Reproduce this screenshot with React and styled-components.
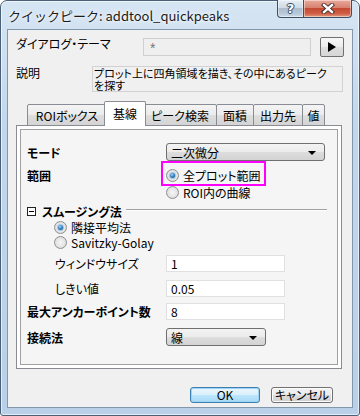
import React from 'react';
import styled, { createGlobalStyle } from 'styled-components';

const GlobalStyle = createGlobalStyle`
  html, body {
    margin: 0;
    padding: 0;
    background: #ffffff;
  }
  body {
    font-family: "Noto Sans CJK JP", "Noto Sans", sans-serif;
    font-size: 12px;
    color: #000;
    font-feature-settings: "palt" 1;
  }
  * {
    box-sizing: border-box;
  }
`;

const Window = styled.div`
  width: 360px;
  height: 416px;
  display: flex;
  flex-direction: column;
  padding: 0 6px 7px;
  border: 1px solid #4a5f78;
  border-radius: 7px 7px 3px 3px;
  background: linear-gradient(180deg, #d6e5f3 0%, #c2d7ec 30%, #b9d0e8 100%);
  box-shadow: inset 0 0 0 1px rgba(255, 255, 255, 0.6);
`;

const TitleBar = styled.div`
  height: 28px;
  display: flex;
  align-items: center;
  justify-content: space-between;
  padding-left: 1px;
`;

const Title = styled.div`
  font-size: 13px;
  color: #1b1b1b;
  font-feature-settings: normal;
  text-shadow: 0 0 6px rgba(255, 255, 255, 0.95), 0 0 3px #fff;
`;

const Caption = styled.div`
  align-self: flex-start;
  display: flex;
  margin-top: -1px;
  margin-right: 1px;
`;

const CaptionButton = styled.div`
  width: ${(p) => p.$w}px;
  height: 18px;
  display: flex;
  align-items: center;
  justify-content: center;
  border: 1px solid #3d4f66;
  border-top: none;
  border-left: ${(p) => (p.$first ? '1px solid #3d4f66' : 'none')};
  border-radius: ${(p) => (p.$first ? '0 0 0 4px' : '0 0 4px 0')};
  background: ${(p) =>
    p.$danger
      ? 'linear-gradient(180deg, #e9a99c 0%, #d7826f 45%, #c44a33 50%, #cf5f45 80%, #e49a80 100%)'
      : 'linear-gradient(180deg, #e6edf5 0%, #cfdbe7 45%, #aebdcd 50%, #b8c8d8 80%, #d0dde9 100%)'};
  box-shadow: inset 0 0 0 1px rgba(255, 255, 255, 0.45);
  color: #fff;
  font-family: "DejaVu Sans", sans-serif;
  font-weight: bold;
  font-size: 13px;
  text-shadow: 0 0 1px #243447, 1px 0 0 #3b4d63, -1px 0 0 #3b4d63, 0 1px 0 #3b4d63, 0 -1px 0 #3b4d63;
`;

const Client = styled.div`
  flex: 1;
  display: flex;
  flex-direction: column;
  padding: 7px 0 0;
  background: #f0f0f0;
  border: 1px solid #8296ad;
`;

const TopRow = styled.div`
  display: flex;
  align-items: flex-start;
  padding: 0 8px;
  margin-top: ${(p) => p.$mt || 0}px;
`;

const FieldLabel = styled.div`
  width: ${(p) => p.$w}px;
  flex-shrink: 0;
  line-height: 13px;
  white-space: nowrap;
`;

const ThemeInput = styled.div`
  width: 168px;
  height: 18px;
  margin-top: 1px;
  padding: 0 6px;
  border: 1px solid #cfcfcf;
  background: #efefef;
  color: #777777;
  font-family: "Liberation Sans", sans-serif;
  font-size: 14px;
  line-height: 18px;
`;

const ArrowButton = styled.div`
  width: 24px;
  height: 20px;
  margin-left: 9px;
  display: flex;
  align-items: center;
  justify-content: center;
  border: 1px solid #707070;
  border-radius: 2px;
  background: linear-gradient(180deg, #f7f7f7 0%, #ececec 50%, #dedede 51%, #d6d6d6 100%);
`;

const Description = styled.div`
  width: 251px;
  height: 26px;
  padding: 0 1px;
  border: 1px solid #d2d2d2;
  background: #f0f0f0;
  font-size: 11px;
  line-height: 12px;
  white-space: nowrap;
  overflow: hidden;
`;

const TabStrip = styled.div`
  display: flex;
  align-items: flex-end;
  height: 25px;
  margin: 9px 0 -1px 19px;
  position: relative;
  z-index: 1;
`;

const Tab = styled.div`
  position: relative;
  z-index: ${(p) => (p.$active ? 2 : 1)};
  width: ${(p) => (p.$active ? p.$w + 5 : p.$w + 1)}px;
  height: ${(p) => (p.$active ? 25 : 22)}px;
  margin: 0 ${(p) => (p.$active ? -3 : -1)}px 0 ${(p) => (p.$active ? -2 : 0)}px;
  display: flex;
  align-items: center;
  justify-content: center;
  padding-bottom: ${(p) => (p.$active ? 1 : 0)}px;
  border: 1px solid #898c95;
  border-bottom: ${(p) => (p.$active ? 'none' : '1px solid #898c95')};
  border-radius: 2px 2px 0 0;
  background: ${(p) =>
    p.$active
      ? '#ffffff'
      : 'linear-gradient(180deg, #f4f4f4 0%, #ebebeb 50%, #dedede 51%, #d4d4d4 100%)'};
  white-space: nowrap;
`;

const Panel = styled.div`
  height: 244px;
  margin: 0 10px 0 8px;
  padding: 3px;
  border: 1px solid #898c95;
  background: #ffffff;
`;

const Sheet = styled.div`
  height: 100%;
  padding: 13px 10px 0 6px;
  border: 1px solid #a0a0a0;
  background: #f5f5f5;
`;

const Row = styled.div`
  display: flex;
  align-items: ${(p) => (p.$top ? 'flex-start' : 'center')};
  min-height: ${(p) => p.$h || 17}px;
  margin-top: ${(p) => p.$mt || 0}px;
`;

const Label = styled.div`
  width: ${(p) => 139 - (p.$indent || 0)}px;
  margin-left: ${(p) => p.$indent || 0}px;
  flex-shrink: 0;
  font-weight: ${(p) => (p.$bold ? 'bold' : 'normal')};
  line-height: ${(p) => (p.$top ? '17px' : '15px')};
  white-space: nowrap;
`;

const Select = styled.div`
  width: ${(p) => p.$w}px;
  height: 18px;
  display: flex;
  align-items: center;
  justify-content: space-between;
  padding: 0 8px 0 4px;
  border: 1px solid #707070;
  border-radius: 3px;
  background: linear-gradient(180deg, #f3f3f3 0%, #ebebeb 50%, #dddddd 51%, #d3d3d3 100%);
  line-height: 15px;
`;

const Caret = styled.span`
  width: 0;
  height: 0;
  border-left: 4px solid transparent;
  border-right: 4px solid transparent;
  border-top: 4px solid #000;
  margin-top: 1px;
`;

const TextInput = styled.div`
  width: 119px;
  height: 17px;
  padding: 0 4px;
  border: 1px solid #e0e0e3;
  background: #ffffff;
  line-height: 15px;
`;

const RadioGroup = styled.div`
  display: flex;
  flex-direction: column;
  margin-left: ${(p) => p.$indent || 0}px;
`;

const RadioItem = styled.div`
  position: relative;
  display: flex;
  align-items: center;
  gap: 4px;
  height: ${(p) => p.$h}px;
  line-height: ${(p) => p.$h}px;
  white-space: nowrap;
`;

const RadioDot = styled.span`
  width: 13px;
  height: 13px;
  flex-shrink: 0;
  border-radius: 50%;
  border: 1px solid #8e8f8f;
  background: radial-gradient(circle at 50% 50%, #f6f6f6 0%, #e3e3e3 60%, #cfcfcf 100%);
  display: flex;
  align-items: center;
  justify-content: center;

  &::after {
    content: '';
    display: ${(p) => (p.$checked ? 'block' : 'none')};
    width: 5px;
    height: 5px;
    border-radius: 50%;
    background: radial-gradient(circle at 40% 35%, #a7d6fb 0%, #3585c8 45%, #0f3f74 100%);
    box-shadow: 0 0 0 1px #9fc6e6;
  }
`;

const Highlight = styled.span`
  position: absolute;
  left: -5px;
  top: -6px;
  width: 105px;
  height: 25px;
  border: 2px solid #ff00ff;
  pointer-events: none;
`;

const Section = styled.div`
  display: flex;
  align-items: center;
  height: 17px;
  line-height: 17px;
  margin-top: 2px;
  font-weight: bold;
  white-space: nowrap;
`;

const Toggle = styled.span`
  width: 9px;
  height: 9px;
  margin-right: 6px;
  border: 1px solid #222;
  background: #fff;
  display: flex;
  align-items: center;
  justify-content: center;

  &::after {
    content: '';
    width: 5px;
    height: 1px;
    background: #000;
  }
`;

const Rule = styled.span`
  flex: 1;
  height: 2px;
  margin-left: 4px;
  margin-top: -3px;
  border-top: 1px solid #a0a0a0;
  border-bottom: 1px solid #ffffff;
`;

const Footer = styled.div`
  display: flex;
  justify-content: flex-end;
  gap: 11px;
  margin-top: 18px;
  padding-right: 19px;
`;

const Button = styled.div`
  width: ${(p) => p.$w}px;
  height: 16px;
  display: flex;
  align-items: center;
  justify-content: center;
  border: 1px solid ${(p) => (p.$default ? '#3c7fb1' : '#707070')};
  border-radius: 3px;
  background: ${(p) =>
    p.$default
      ? 'linear-gradient(180deg, #eaf6fd 0%, #d9f0fc 50%, #bee6fd 51%, #a7d9f5 100%)'
      : 'linear-gradient(180deg, #f2f2f2 0%, #ebebeb 50%, #dddddd 51%, #cfcfcf 100%)'};
  box-shadow: ${(p) => (p.$default ? 'inset 0 0 0 1px #9ed3f5' : 'inset 0 0 0 1px #fcfcfc')};
  line-height: 14px;
`;

const tabs = [
  { label: 'ROIボックス', w: 79 },
  { label: '基線', w: 37, active: true },
  { label: 'ピーク検索', w: 73 },
  { label: '面積', w: 37 },
  { label: '出力先', w: 49 },
  { label: '値', w: 22 },
];

const CloseGlyph = () => (
  <svg width="14" height="11" viewBox="0 0 14 11">
    <path d="M3 2 L11 9 M11 2 L3 9" stroke="#3a2a2a" strokeWidth="4.2" strokeLinecap="square" />
    <path d="M3 2 L11 9 M11 2 L3 9" stroke="#ffffff" strokeWidth="2.4" strokeLinecap="square" />
  </svg>
);

const PlayGlyph = () => (
  <svg width="8" height="10" viewBox="0 0 8 10">
    <path d="M0 0 L8 5 L0 10 Z" fill="#000" />
  </svg>
);

const App = () => (
  <>
    <GlobalStyle />
    <Window>
      <TitleBar>
        <Title>クイックピーク: addtool_quickpeaks</Title>
        <Caption>
          <CaptionButton $w={27} $first>?</CaptionButton>
          <CaptionButton $w={48} $danger>
            <CloseGlyph />
          </CaptionButton>
        </Caption>
      </TitleBar>

      <Client>
        <TopRow>
          <FieldLabel $w={127}>ダイアログ・テーマ</FieldLabel>
          <ThemeInput>*</ThemeInput>
          <ArrowButton>
            <PlayGlyph />
          </ArrowButton>
        </TopRow>

        <TopRow $mt={9}>
          <FieldLabel $w={76}>説明</FieldLabel>
          <Description>
            プロット上に四角領域を描き、その中にあるピーク
            <br />
            を探す
          </Description>
        </TopRow>

        <TabStrip>
          {tabs.map((t) => (
            <Tab key={t.label} $w={t.w} $active={t.active}>
              {t.label}
            </Tab>
          ))}
        </TabStrip>

        <Panel>
          <Sheet>
            <Row $h={18}>
              <Label $bold>モード</Label>
              <Select $w={159}>
                <span>二次微分</span>
                <Caret />
              </Select>
            </Row>

            <Row $top $mt={6}>
              <Label $bold $top>範囲</Label>
              <RadioGroup>
                <RadioItem $h={17}>
                  <RadioDot $checked />
                  全プロット範囲
                  <Highlight />
                </RadioItem>
                <RadioItem $h={17}>
                  <RadioDot />
                  ROI内の曲線
                </RadioItem>
              </RadioGroup>
            </Row>

            <Section>
              <Toggle />
              スムージング法
              <Rule />
            </Section>

            <RadioGroup $indent={27}>
              <RadioItem $h={15}>
                <RadioDot $checked />
                隣接平均法
              </RadioItem>
              <RadioItem $h={15}>
                <RadioDot />
                Savitzky-Golay
              </RadioItem>
            </RadioGroup>

            <Row $mt={5}>
              <Label $indent={28}>ウィンドウサイズ</Label>
              <TextInput>1</TextInput>
            </Row>
            <Row $mt={8}>
              <Label $indent={28}>しきい値</Label>
              <TextInput>0.05</TextInput>
            </Row>
            <Row $mt={6}>
              <Label $bold>最大アンカーポイント数</Label>
              <TextInput>8</TextInput>
            </Row>
            <Row $h={18} $mt={8}>
              <Label $bold>接続法</Label>
              <Select $w={100}>
                <span>線</span>
                <Caret />
              </Select>
            </Row>
          </Sheet>
        </Panel>

        <Footer>
          <Button $w={70} $default>OK</Button>
          <Button $w={62}>キャンセル</Button>
        </Footer>
      </Client>
    </Window>
  </>
);

export default App;
